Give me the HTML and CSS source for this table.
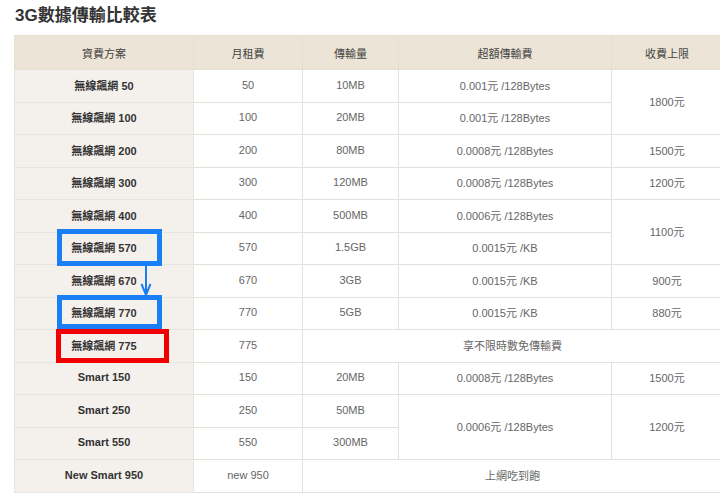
FILE: index.html
```html
<!DOCTYPE html>
<html lang="zh-Hant">
<head>
<meta charset="utf-8">
<link rel="stylesheet" href="styles.css">
</head>
<body>
<div class="page">
  <h1 class="title">3G數據傳輸比較表</h1>
  <div class="table-wrap">
    <table class="plans">
      <colgroup>
        <col class="c1"><col class="c2"><col class="c3"><col class="c4"><col class="c5">
      </colgroup>
      <thead>
        <tr><th>資費方案</th><th>月租費</th><th>傳輸量</th><th>超額傳輸費</th><th>收費上限</th></tr>
      </thead>
      <tbody>
        <tr><th>無線飆網 50</th><td>50</td><td>10MB</td><td>0.001元 /128Bytes</td><td rowspan="2">1800元</td></tr>
        <tr><th>無線飆網 100</th><td>100</td><td>20MB</td><td>0.001元 /128Bytes</td></tr>
        <tr><th>無線飆網 200</th><td>200</td><td>80MB</td><td>0.0008元 /128Bytes</td><td>1500元</td></tr>
        <tr><th>無線飆網 300</th><td>300</td><td>120MB</td><td>0.0008元 /128Bytes</td><td>1200元</td></tr>
        <tr><th>無線飆網 400</th><td>400</td><td>500MB</td><td>0.0006元 /128Bytes</td><td rowspan="2">1100元</td></tr>
        <tr><th>無線飆網 570</th><td>570</td><td>1.5GB</td><td>0.0015元 /KB</td></tr>
        <tr><th>無線飆網 670</th><td>670</td><td>3GB</td><td>0.0015元 /KB</td><td>900元</td></tr>
        <tr><th>無線飆網 770</th><td>770</td><td>5GB</td><td>0.0015元 /KB</td><td>880元</td></tr>
        <tr><th>無線飆網 775</th><td>775</td><td colspan="3">享不限時數免傳輸費</td></tr>
        <tr><th>Smart 150</th><td>150</td><td>20MB</td><td>0.0008元 /128Bytes</td><td>1500元</td></tr>
        <tr><th>Smart 250</th><td>250</td><td>50MB</td><td rowspan="2">0.0006元 /128Bytes</td><td rowspan="2">1200元</td></tr>
        <tr><th>Smart 550</th><td>550</td><td>300MB</td></tr>
        <tr><th>New Smart 950</th><td>new 950</td><td colspan="3">上網吃到飽</td></tr>
      </tbody>
    </table>
    <div class="mark mark-blue mark-a"></div>
    <div class="mark mark-blue mark-b"></div>
    <div class="mark mark-red mark-c"></div>
    <svg class="arrow" width="12" height="30" viewBox="0 0 12 30">
      <line x1="6" y1="0" x2="6" y2="26" stroke="#1a7ef5" stroke-width="2"/>
      <path d="M1.5 18 L6 29 L10.5 18" fill="none" stroke="#1a7ef5" stroke-width="2"/>
    </svg>
  </div>
</div>
</body>
</html>
```

FILE: styles.css
```css
html, body {
  margin: 0;
  padding: 0;
  background: #fff;
  overflow: hidden;
}
body {
  font-family: "Liberation Sans", Arial, "Noto Sans CJK TC", sans-serif;
  color: #666;
}
.page {
  padding: 0 0 0 14px;
  width: 720px;
}
.title {
  font-family: "Liberation Sans", Arial, "Noto Sans CJK TC", sans-serif;
  font-size: 17px;
  line-height: 22px;
  font-weight: bold;
  color: #333;
  margin: 5px 0 8px 1px;
}
.table-wrap {
  position: relative;
  width: 708px;
}
.plans {
  border-collapse: collapse;
  table-layout: fixed;
  width: 708px;
  font-size: 11px;
}
.c1 { width: 179px; }
.c2 { width: 109px; }
.c3 { width: 96px; }
.c4 { width: 213px; }
.c5 { width: 111px; }
.plans th, .plans td {
  border: 1px solid #e4e0da;
  text-align: center;
  padding: 0;
}
.plans thead th {
  background: #ece4d6;
  color: #444;
  font-weight: normal;
  height: 33px;
  border-color: #e6ded0;
  font-family: "Noto Sans CJK TC", "Liberation Sans", sans-serif;
  font-size: 11px;
}
.plans tbody tr {
  height: 32.5px;
}
.plans tbody th, .plans tbody td {
  padding-bottom: 2px;
}
.plans tbody th {
  background: #f4f1ec;
  color: #333;
  font-weight: bold;
  font-size: 11px;
  border-color: #e8e4de;
}
.plans tbody td {
  color: #666;
  background: #fff;
}
.mark {
  position: absolute;
  box-sizing: border-box;
  border: 5px solid;
}
.mark-blue { border-color: #1a7ef5; }
.mark-red { border-color: #f20000; }
.mark-a { left: 43px; top: 194px; width: 105px; height: 37px; }
.mark-b { left: 43px; top: 260px; width: 105px; height: 34px; }
.mark-c { left: 42px; top: 294px; width: 113px; height: 34px; }
.arrow {
  position: absolute;
  left: 126px;
  top: 231px;
}
```
